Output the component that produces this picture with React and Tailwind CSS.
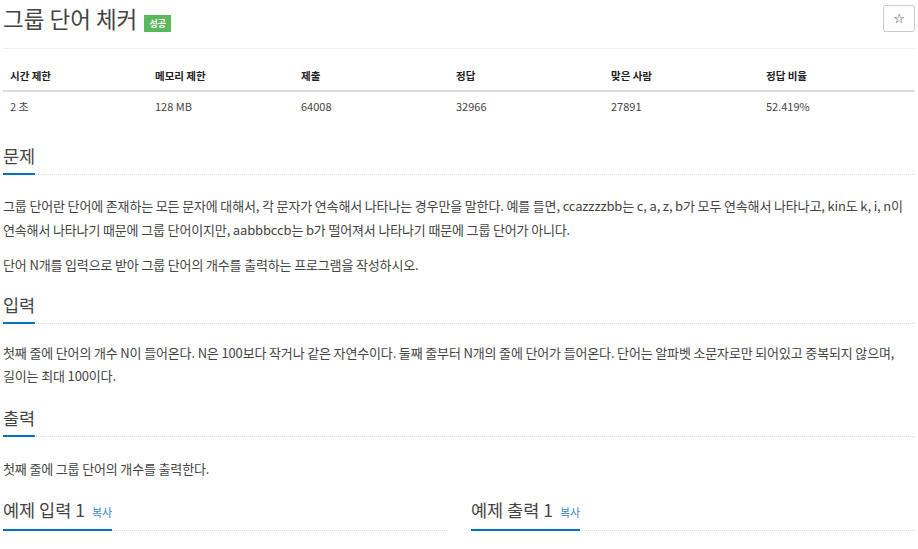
import React from 'react';

const font = { fontFamily: '"Noto Sans CJK KR", "Open Sans", sans-serif' };

const stats = [
  { label: '시간 제한', value: '2 초' },
  { label: '메모리 제한', value: '128 MB' },
  { label: '제출', value: '64008' },
  { label: '정답', value: '32966' },
  { label: '맞은 사람', value: '27891' },
  { label: '정답 비율', value: '52.419%' },
];

const SectionTitle = ({ children, copy }) => (
  <div className="border-b border-dotted border-[#dcdcdc]">
    <h2 className="inline-flex items-baseline -mb-px border-b-2 border-[#0076c0] pb-[5px] text-[17.5px] leading-[24px] text-[#444]">
      {children}
      {copy && (
        <span className="ml-[7px] text-[11px] text-[#3a86c8]">복사</span>
      )}
    </h2>
  </div>
);

const Para = ({ children, className = '' }) => (
  <p className={`break-keep text-[13px] leading-[23.5px] tracking-[-0.15px] text-[#444] ${className}`}>{children}</p>
);

export default function App() {
  return (
    <div className="bg-white min-h-[549px] w-[918px] overflow-hidden" style={font}>
      <div className="ml-[3px] w-[912px]">
        {/* title */}
        <div className="flex h-[49px] items-start justify-between border-b border-[#eee] pt-[3px]">
          <div className="flex items-start">
            <h1 className="text-[22.5px] leading-[30px] text-[#444]">그룹 단어 체커</h1>
            <span className="ml-[7px] mt-[12px] flex h-[17px] w-[27px] items-center justify-center bg-[#5cb85c] text-[9px] font-bold text-white">
              성공
            </span>
          </div>
          <button className="mt-[2px] flex h-[27px] w-[32px] items-center justify-center rounded-[2px] border border-[#ccc] bg-white text-[13px] text-[#222]">
            <span style={{ fontFamily: '"DejaVu Sans", sans-serif' }}>☆</span>
          </button>
        </div>

        {/* stats table */}
        <div className="grid grid-cols-[145px_146px_155px_155px_155px_1fr]">
          {stats.map((s) => (
            <div
              key={s.label}
              className="flex h-[43px] items-end border-b-2 border-[#ddd] pb-[6px] pl-[7px] text-[10.5px] font-bold leading-[16px] text-[#222]"
            >
              {s.label}
            </div>
          ))}
          {stats.map((s) => (
            <div
              key={s.value}
              className="flex h-[28px] items-center pl-[7px] text-[11px] text-[#444]"
            >
              {s.value}
            </div>
          ))}
        </div>

        {/* 문제 */}
        <section className="mt-[24px]">
          <SectionTitle>문제</SectionTitle>
          <Para className="mt-[19px]">
            그룹 단어란 단어에 존재하는 모든 문자에 대해서, 각 문자가 연속해서 나타나는 경우만을 말한다. 예를 들면, ccazzzzbb는 c, a, z, b가 모두 연속해서 나타나고, kin도 k, i, n이 연속해서 나타나기 때문에 그룹 단어이지만, aabbbccb는 b가 떨어져서 나타나기 때문에 그룹 단어가 아니다.
          </Para>
          <Para className="mt-[12px]">
            단어 N개를 입력으로 받아 그룹 단어의 개수를 출력하는 프로그램을 작성하시오.
          </Para>
        </section>

        {/* 입력 */}
        <section className="mt-[16px]">
          <SectionTitle>입력</SectionTitle>
          <Para className="mt-[17px]">
            첫째 줄에 단어의 개수 N이 들어온다. N은 100보다 작거나 같은 자연수이다. 둘째 줄부터 N개의 줄에 단어가 들어온다. 단어는 알파벳 소문자로만 되어있고 중복되지 않으며, 길이는 최대 100이다.
          </Para>
        </section>

        {/* 출력 */}
        <section className="mt-[18px]">
          <SectionTitle>출력</SectionTitle>
          <Para className="mt-[20px]">첫째 줄에 그룹 단어의 개수를 출력한다.</Para>
        </section>

        {/* 예제 */}
        <div className="mt-[18px] grid grid-cols-2 gap-[24px]">
          <SectionTitle copy>예제 입력 1</SectionTitle>
          <SectionTitle copy>예제 출력 1</SectionTitle>
        </div>
      </div>
    </div>
  );
}
